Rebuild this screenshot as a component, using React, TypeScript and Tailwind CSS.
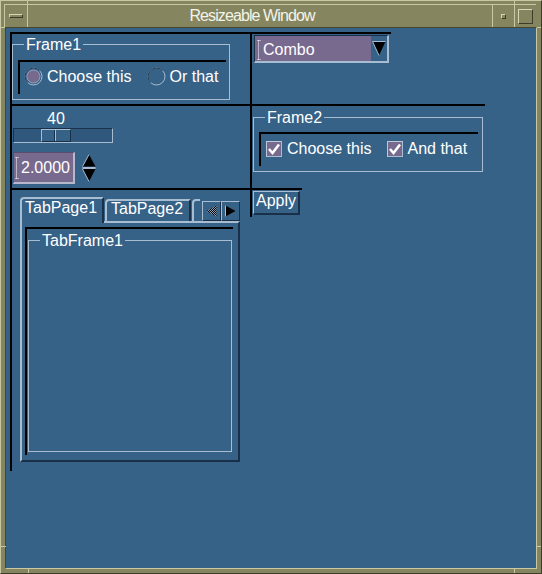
import React from 'react';

// colours of the motif-ish theme
// blue #376288, purple #786a8e, light edge #a8bcd2, dark edge #1a3049

function Cell({ className = '', children }: { className?: string; children?: React.ReactNode }) {
  return <div className={`border-t-2 border-l-2 border-black shrink-0 ${className}`}>{children}</div>;
}

function Group({
  label,
  className = '',
  children,
}: {
  label: string;
  className?: string;
  children?: React.ReactNode;
}) {
  return (
    <div className={`relative border border-[#a8bcd2] shrink-0 ${className}`}>
      <span className="absolute -top-[9px] left-[11px] px-[2px] bg-[#376288] text-[16px] leading-[18px] whitespace-nowrap">
        {label}
      </span>
      {children}
    </div>
  );
}

function IBeam({ h = 20 }: { h?: number }) {
  return (
    <svg width="5" height={h} className="shrink-0">
      <path
        d={`M0.5 0.5H4.5M1.5 0.5V${h - 0.5}M0.5 ${h - 0.5}H4.5`}
        stroke="#ffffff"
        strokeDasharray="1 1"
        fill="none"
      />
    </svg>
  );
}

function Radio({ on }: { on?: boolean }) {
  return (
    <svg width="19" height="19" className="shrink-0">
      <circle cx="9.5" cy="9.5" r="8.5" fill="none" stroke="#a8bcd2" />
      <path d="M3.49 15.51A8.5 8.5 0 0 1 15.51 3.49" fill="none" stroke="#1a3049" />
      {on && <circle cx="9.5" cy="9.5" r="6.5" fill="#786a8e" stroke="#8e9fbb" />}
    </svg>
  );
}

function Check() {
  return (
    <span className="w-[16px] h-[16px] shrink-0 bg-[#786a8e] border border-t-[#c0c8d8] border-l-[#c0c8d8] border-r-[#a8bcd2] border-b-[#a8bcd2] flex items-center justify-center">
      <svg width="12" height="12">
        <path d="M1 6 L4.5 10 L11 1.5" stroke="#ffffff" strokeWidth="2.5" fill="none" />
      </svg>
    </span>
  );
}

function Notch({ className }: { className: string }) {
  return <div className={`absolute bg-[#c8c8a4] ${className}`} />;
}

export default function App() {
  return (
    <div className="relative w-[542px] h-[574px] bg-[#858560] border border-t-[#c8c8a4] border-l-[#c8c8a4] border-r-[#3c3c28] border-b-[#3c3c28] p-[3px] flex flex-col font-['Liberation_Sans',Arial,sans-serif] text-white overflow-hidden">
      {/* frame corner notches */}
      <Notch className="left-[26px] top-0 w-px h-[4px]" />
      <Notch className="left-[513px] top-0 w-px h-[4px]" />
      <Notch className="left-0 top-[26px] w-[4px] h-px" />
      <Notch className="right-0 top-[26px] w-[4px] h-px" />
      <Notch className="left-0 top-[545px] w-[5px] h-px" />
      <Notch className="right-0 top-[545px] w-[5px] h-px" />
      <Notch className="left-[27px] bottom-0 w-px h-[5px]" />
      <Notch className="left-[513px] bottom-0 w-px h-[5px]" />

      {/* title bar */}
      <div className="h-[23px] mr-[2px] flex border-t border-l border-t-[#c8c8a4] border-l-[#c8c8a4] shrink-0">
        <div className="w-[22px] flex items-center justify-center">
          <div className="w-[14px] h-[4px] border border-t-[#d8d8b8] border-l-[#d8d8b8] border-r-[#3c3c28] border-b-[#3c3c28]" />
        </div>
        <div className="w-px bg-[#c8c8a4]" />
        <div className="flex-1 flex items-center justify-center pr-[16px] text-[16px] tracking-[-0.9px] text-[#f4f4e8]">
          Resizeable Window
        </div>
        <div className="w-px bg-[#c8c8a4]" />
        <div className="w-[21px] flex items-center justify-center">
          <div className="w-[5px] h-[5px] border border-t-[#d8d8b8] border-l-[#d8d8b8] border-r-[#3c3c28] border-b-[#3c3c28]" />
        </div>
        <div className="w-px bg-[#c8c8a4]" />
        <div className="w-[21px] flex items-center justify-center">
          <div className="w-[15px] h-[15px] border border-t-[#d8d8b8] border-l-[#d8d8b8] border-r-[#3c3c28] border-b-[#3c3c28]" />
        </div>
      </div>

      {/* client area */}
      <div className="flex-1 mx-[1px] mb-[1px] bg-[#376288] border border-t-[#46462e] border-l-[#46462e] border-r-[#c8c8a4] border-b-[#c8c8a4] p-[4px]">
        <div className="flex items-start">
          {/* left column */}
          <div className="flex flex-col w-[240px] shrink-0">
            <Cell className="h-[72px]">
              <Group label="Frame1" className="mt-[10px] w-[218px] h-[56px]">
                <Cell className="ml-[5px] mt-[15px] w-[208px] h-[34px]">
                  <div className="h-[29px] flex items-center pl-[4px] gap-[15px] text-[16px] leading-[18px]">
                    <div className="flex items-center gap-[4px]">
                      <Radio on />
                      <span>Choose this</span>
                    </div>
                    <div className="flex items-center gap-[4px]">
                      <Radio />
                      <span>Or that</span>
                    </div>
                  </div>
                </Cell>
              </Group>
            </Cell>

            <Cell className="h-[84px]">
              <div className="ml-[1px] mt-[4px] w-[100px] pl-[34px] text-[16px] leading-[18px]">40</div>
              <div className="ml-[1px] w-[100px] h-[15px] bg-[#2f587c] border border-t-[#1a3049] border-l-[#1a3049] border-r-[#a8bcd2] border-b-[#a8bcd2] flex pl-[27px]">
                <div className="w-[30px] h-full flex bg-[#376288] border border-t-[#a8bcd2] border-l-[#a8bcd2] border-r-[#1a3049] border-b-[#1a3049]">
                  <div className="w-[13px] h-full border-r border-r-[#1a3049]" />
                  <div className="w-px h-full bg-[#a8bcd2]" />
                </div>
              </div>
              <div className="mt-[9px] ml-[1px] flex items-center gap-[7px]">
                <div className="w-[62px] h-[32px] bg-[#786a8e] border-t border-l border-t-[#5a4c6c] border-l-[#5a4c6c] border-r-2 border-b-2 border-r-[#b8b8cc] border-b-[#b8b8cc] flex items-center pl-[1px] gap-[1px]">
                  <IBeam h={22} />
                  <span className="text-[16px] leading-[18px]">2.0000</span>
                </div>
                <svg width="14" height="28" className="shrink-0">
                  <polygon points="7,0.5 0.5,12.5 13.5,12.5" fill="#000000" />
                  <path d="M7 0.5 L0.5 12.5" stroke="#a8bcd2" fill="none" />
                  <path d="M0.5 13.5H13.5" stroke="#a8bcd2" fill="none" />
                  <polygon points="0.5,15 13.5,15 7,27.5" fill="#000000" />
                  <path d="M0.5 15 L7 27.5" stroke="#a8bcd2" fill="none" />
                  <path d="M0.5 14.5H13.5" stroke="#a8bcd2" fill="none" />
                </svg>
              </div>
            </Cell>

            <Cell className="h-[283px]">
              <div className="ml-[8px] mt-[7px] w-[220px] flex flex-col">
                {/* tab strip */}
                <div className="h-[24px] flex items-end text-[16px]">
                  <div className="relative z-10 -mb-[2px] h-[26px] w-[84px] bg-[#376288] rounded-tl-[4px] border-l-2 border-t-2 border-r-2 border-l-[#a8bcd2] border-t-[#a8bcd2] border-r-[#1a3049] pl-[3px] leading-[18px]">
                    TabPage1
                  </div>
                  <div className="ml-[1px] h-[22px] w-[86px] rounded-tl-[4px] border-l-2 border-t-2 border-r-2 border-l-[#a8bcd2] border-t-[#a8bcd2] border-r-[#1a3049] pl-[4px] leading-[16px]">
                    TabPage2
                  </div>
                  <div className="ml-[1px] h-[22px] w-[8px] rounded-tl-[4px] border-l-2 border-t-2 border-l-[#a8bcd2] border-t-[#a8bcd2]" />
                  <div className="ml-[2px] h-[20px] flex">
                    <div className="w-[19px] h-full border border-t-[#a8bcd2] border-l-[#a8bcd2] border-r-[#1a3049] border-b-[#1a3049] flex items-center justify-center">
                      <svg width="11" height="12">
                        <defs>
                          <pattern id="dith" width="2" height="2" patternUnits="userSpaceOnUse">
                            <rect width="1" height="1" fill="#000000" />
                            <rect x="1" y="1" width="1" height="1" fill="#000000" />
                            <rect x="1" width="1" height="1" fill="#8aa0b8" />
                            <rect y="1" width="1" height="1" fill="#8aa0b8" />
                          </pattern>
                        </defs>
                        <polygon points="10.5,0.5 10.5,11.5 0.5,6" fill="url(#dith)" />
                      </svg>
                    </div>
                    <div className="w-[19px] h-full border border-t-[#a8bcd2] border-l-[#a8bcd2] border-r-[#1a3049] border-b-[#1a3049] flex items-center justify-center">
                      <svg width="11" height="12">
                        <polygon points="0.5,0.5 0.5,11.5 10.5,6" fill="#000000" />
                        <path d="M0.5 0.5V11.5" stroke="#a8bcd2" fill="none" />
                      </svg>
                    </div>
                  </div>
                </div>
                {/* panel */}
                <div className="h-[241px] border-2 border-t-[#a8bcd2] border-l-[#a8bcd2] border-r-[#1a3049] border-b-[#1a3049]">
                  <Cell className="ml-[3px] mt-[4px] w-[208px] h-[228px]">
                    <Group label="TabFrame1" className="ml-[1px] mt-[11px] w-[204px] h-[212px]" />
                  </Cell>
                </div>
              </div>
            </Cell>
          </div>

          {/* right column */}
          <div className="flex flex-col items-start">
            <Cell className="w-[141px] h-[72px]">
              <div className="ml-[2px] mt-[1px] w-[135px] h-[28px] flex border-t border-l border-t-[#1a3049] border-l-[#1a3049] border-r-2 border-b-2 border-r-[#a8bcd2] border-b-[#a8bcd2]">
                <div className="flex-1 bg-[#786a8e] flex items-center pl-[2px] pt-[3px] gap-[1px]">
                  <IBeam h={20} />
                  <span className="text-[16px] leading-[18px]">Combo</span>
                </div>
                <div className="w-[16px] flex items-center justify-center">
                  <svg width="14" height="15">
                    <polygon points="0.5,0.5 13.5,0.5 7,14.5" fill="#000000" />
                    <path d="M0.5 0.5H13.5M0.5 0.5L7 14.5" stroke="#a8bcd2" fill="none" />
                  </svg>
                </div>
              </div>
            </Cell>

            <Cell className="w-[235px] h-[84px]">
              <Group label="Frame2" className="ml-[1px] mt-[11px] w-[230px] h-[55px]">
                <Cell className="ml-[5px] mt-[14px] w-[219px] h-[34px]">
                  <div className="h-[29px] flex items-center pl-[5px] gap-[15px] text-[16px] leading-[18px]">
                    <div className="flex items-center gap-[5px]">
                      <Check />
                      <span>Choose this</span>
                    </div>
                    <div className="flex items-center gap-[5px]">
                      <Check />
                      <span>And that</span>
                    </div>
                  </div>
                </Cell>
              </Group>
            </Cell>

            <Cell className="w-[52px] h-[29px]">
              <button className="ml-[1px] mt-[1px] w-[47px] h-[24px] border-t border-l border-t-[#a8bcd2] border-l-[#a8bcd2] border-r-2 border-b-2 border-r-[#1a3049] border-b-[#1a3049] text-[16px] leading-[16px] pl-[2px] text-left flex items-start pt-[1px]">
                Apply
              </button>
            </Cell>
          </div>
        </div>
      </div>
    </div>
  );
}
